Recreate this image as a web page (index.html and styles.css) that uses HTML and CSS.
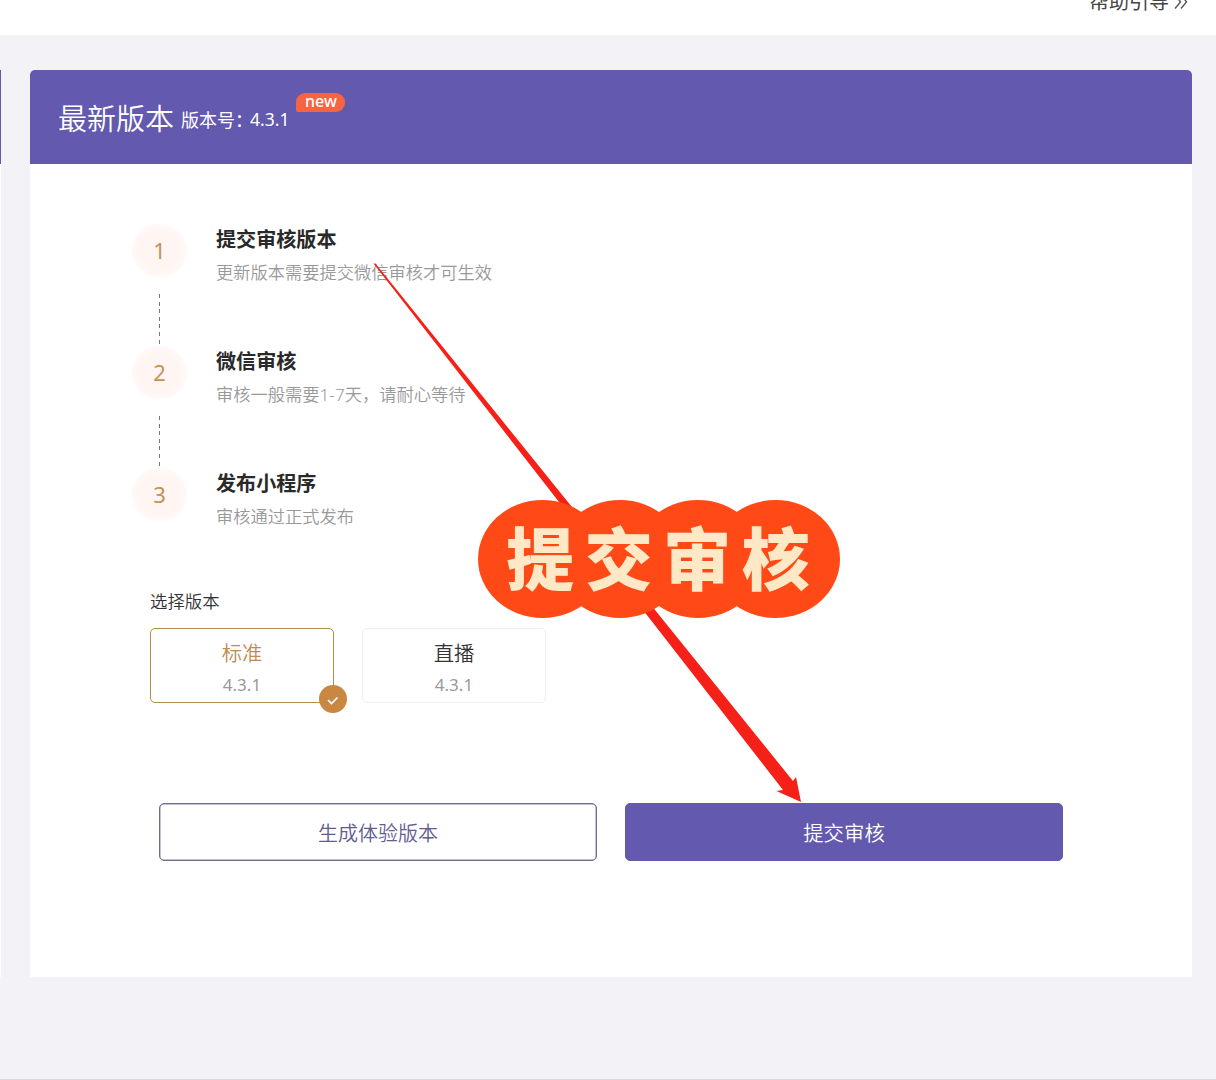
FILE: index.html
```html
<!DOCTYPE html>
<html lang="zh-CN">
<head>
<meta charset="utf-8">
<title>最新版本</title>
<link rel="stylesheet" href="styles.css">
</head>
<body>
<header class="topbar"><a class="help">帮助引导<svg class="help-arrow" width="14" height="16" viewBox="0 0 14 16"><path d="M2 2 6.500 8 1 14.500M8 2 12.500 8 7 14.500"/></svg></a></header>
<main class="content">
  <section class="side"><div class="side-head"></div></section>
  <section class="card">
    <div class="card-head">
      <h1 class="title">最新版本</h1>
      <span class="version">版本号：</span><span class="version-no">4.3.1</span>
      <span class="badge">new</span>
    </div>
    <div class="card-body">
      <ol class="steps">
        <li class="step"><span class="num">1</span><div class="step-text"><h2>提交审核版本</h2><p>更新版本需要提交微信审核才可生效</p></div></li>
        <li class="step"><span class="num">2</span><div class="step-text"><h2>微信审核</h2><p>审核一般需要1-7天，请耐心等待</p></div></li>
        <li class="step"><span class="num">3</span><div class="step-text"><h2>发布小程序</h2><p>审核通过正式发布</p></div></li>
      </ol>
      <div class="choose">选择版本</div>
      <div class="options">
        <div class="option selected"><b>标准</b><span>4.3.1</span>
          <i class="check"><svg width="28" height="28" viewBox="0 0 28 28"><path d="M9 15l3.500 3.500 6-6"/></svg></i>
        </div>
        <div class="option"><b>直播</b><span>4.3.1</span></div>
      </div>
      <div class="actions">
        <button class="btn">生成体验版本</button>
        <button class="btn primary">提交审核</button>
      </div>
    </div>
  </section>
</main>
<svg class="arrow" width="1216" height="1080" viewBox="0 0 1216 1080">
  <path d="M373.500 263.500 375.500 263.500 793 781 796 777 801 802 776.500 791 783 790Z"/>
</svg>
<div class="bubble">
  <svg class="bubble-bg" width="362" height="118" viewBox="0 0 362 118"><ellipse cx="64.500" cy="59" rx="64.500" ry="59"/><ellipse cx="142" cy="59" rx="64.500" ry="59"/><ellipse cx="220" cy="59" rx="64.500" ry="59"/><ellipse cx="297.500" cy="59" rx="64.500" ry="59"/></svg>
  <span>提</span><span>交</span><span>审</span><span>核</span>
</div>
</body>
</html>
```
FILE: styles.css
```css
* { box-sizing: border-box; margin: 0; padding: 0; }
body {
  position: relative;
  width: 1216px;
  height: 1080px;
  overflow: hidden;
  background: #f2f2f7;
  border-bottom: 1px solid #d8d8de;
  font-family: "Noto Sans", "Noto Sans CJK SC", sans-serif;
  color: #333;
}
.topbar {
  height: 35px;
  background: #fff;
  display: flex;
  justify-content: flex-end;
  align-items: flex-start;
  padding-right: 28px;
}
.help { display: flex; align-items: center; gap: 5px; font-size: 20px; line-height: 28px; margin-top: -12px; color: #444; }
.help-arrow { fill: none; stroke: #555; stroke-width: 1.4; }
.content { display: flex; gap: 29px; padding-top: 35px; }
.side { width: 1px; height: 907px; background: #fff; }
.side-head { height: 94px; background: #6258ae; }
.card { width: 1162px; height: 907px; background: #fff; border-radius: 5px 5px 0 0; overflow: hidden; }
.card-head { height: 94px; background: #6359ae; display: flex; align-items: center; padding: 4px 28px 0; color: #fff; }
.title { font-size: 29px; font-weight: 350; line-height: 40px; }
.version { font-size: 18px; margin-left: 7px; width: 69px; white-space: nowrap; }
.version-no { font-size: 17.5px; }
.badge {
  width: 49px;
  height: 19px;
  margin: -34px 0 0 7px;
  border-radius: 9px 9px 9px 2px;
  background: #f66442;
  font-size: 16px;
  font-weight: 500;
  line-height: 17px;
  text-align: center;
}
.card-body { padding: 59px 0 0 101px; }
.steps { list-style: none; }
.step { display: flex; height: 122px; gap: 28px; position: relative; }
.num {
  width: 57px;
  height: 55px;
  border-radius: 50%;
  background: radial-gradient(closest-side, #fff6f4 70%, #fff9f8 94%, #fff);
  color: #c39354;
  font-size: 22px;
  line-height: 55px;
  text-align: center;
}
.step:not(:last-child)::after {
  content: "";
  position: absolute;
  left: 28px;
  top: 71px;
  width: 1px;
  height: 50px;
  background: repeating-linear-gradient(#777 0 4px, transparent 4px 7.6px);
}
.step-text h2 { font-size: 20.1px; line-height: 28px; margin-top: 3px; font-weight: 600; color: #292929; }
.step-text p { font-size: 17.25px; line-height: 26px; margin-top: 6px; font-weight: 350; color: #999; white-space: nowrap; }
.choose { margin: -1px 0 0 19px; font-size: 17.4px; line-height: 26px; font-weight: 350; }
.options { display: flex; gap: 28px; margin: 14px 0 0 19px; }
.option {
  position: relative;
  width: 184px;
  height: 75px;
  border: 1px solid #eee;
  border-radius: 5px;
  display: flex;
  flex-direction: column;
  align-items: center;
  padding-top: 9px;
}
.option b { font-size: 20.3px; line-height: 30px; font-weight: 350; }
.option span { font-size: 17px; line-height: 30px; margin-top: 2px; color: #999; }
.option.selected { border-color: #b28f48; }
.option.selected b { color: #bd8c58; }
.check { position: absolute; right: -14px; bottom: -11px; width: 28px; height: 28px; border-radius: 50%; background: #c98742; }
.check svg { display: block; fill: none; stroke: #fff; stroke-width: 1.7; }
.actions { display: flex; gap: 28px; margin: 100px 0 0 28px; }
.btn {
  width: 438px;
  height: 58px;
  border: 1.5px solid #716b94;
  box-shadow: inset 0 0 0 .5px #8b87a5;
  border-radius: 5px;
  background: #fff;
  color: #625c91;
  font: 350 20px "Noto Sans", "Noto Sans CJK SC", sans-serif;
}
.btn.primary { border-color: #6359ae; background: #6359ae; box-shadow: none; color: #fff; font-size: 20.4px; }
.arrow { position: absolute; left: 0; top: 0; fill: #f52118; }
.bubble {
  position: absolute;
  left: 478px;
  top: 500px;
  width: 362px;
  height: 118px;
  padding: 0 25px 0 23px;
  display: flex;
  color: #ffe8c5;
  font: 900 68px/112px "Noto Sans CJK SC", sans-serif;
}
.bubble span { position: relative; flex: 1; text-align: center; }
.bubble-bg { position: absolute; left: 0; top: 0; fill: #ff4a17; }
```
